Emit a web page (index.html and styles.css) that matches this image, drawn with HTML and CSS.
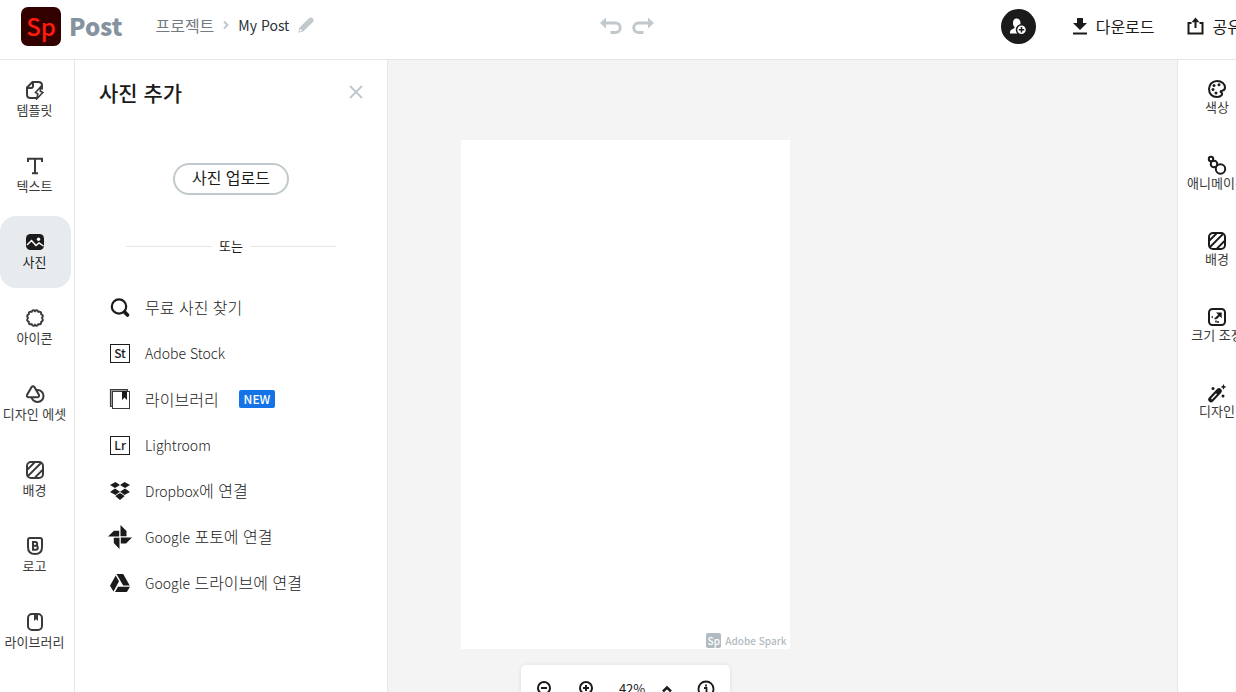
FILE: index.html
```html
<!DOCTYPE html>
<html lang="ko">
<head>
    <meta charset="UTF-8">
    <meta name="viewport" content="width=device-width, initial-scale=1.0">
    <title>My Post</title>
    <link rel="stylesheet" href="styles.css">
</head>
<body>
<div class="app">
    <header class="header">
        <div class="header-left">
            <a class="brand" href="#">
                <span class="logo">Sp</span>
                <span class="brand-name">Post</span>
            </a>
            <nav class="breadcrumb">
                <a class="crumb" href="#">프로젝트</a>
                <svg width="6" height="10" viewBox="0 0 6 10"><path d="M1 1.5l3.5 3.5L1 8.500" fill="none" stroke="#c2c9cd" stroke-width="2"/></svg>
                <span class="project-name">My Post</span>
                <button class="icon-button" aria-label="이름 편집">
                    <svg width="16" height="16" viewBox="0 0 16 16" fill="#c2c9cd"><path d="M1.300 10.700L10.700 1.500Q13 -.4 14.800 1.600Q16.500 3.500 14.700 5.300L5.300 14.600L.3 15.700z"/><path d="M2.300 11.700L4.300 13.700L1.500 14.500z" fill="#fff"/></svg>
                </button>
            </nav>
        </div>
        <div class="history">
            <button class="icon-button" aria-label="실행 취소">
                <svg width="22" height="18" viewBox="0 0 22 18"><path d="M0 6L6 .5v11z" fill="#c2c9cd"/><path d="M5 6h10.500a4.700 4.700 0 0 1 0 9.500H10.500" fill="none" stroke="#c2c9cd" stroke-width="3"/></svg>
            </button>
            <button class="icon-button" aria-label="다시 실행">
                <svg width="22" height="18" viewBox="0 0 22 18"><path d="M22 6L16 .5v11z" fill="#c2c9cd"/><path d="M17 6H6.500a4.700 4.700 0 0 0 0 9.500H11.500" fill="none" stroke="#c2c9cd" stroke-width="3"/></svg>
            </button>
        </div>
        <div class="header-right">
            <button class="invite" aria-label="초대">
                <svg width="17" height="17" viewBox="0 0 17 17"><path d="M6.500 .5c2.500 0 4 1.800 4 4.400 0 2-.7 3.300-1.500 4.100v1l3 1.500v4H0v-1.500c0-2 2-2.700 4.500-4V9C3.500 8.100 3 6.900 3 4.900 3 2.300 4.300.5 6.500.5z" fill="#fff"/><circle cx="11.500" cy="11.700" r="5" fill="#fff" stroke="#1b1b1b" stroke-width="1.500"/><path d="M11.500 9v5.400M8.800 11.700h5.400" stroke="#1b1b1b" stroke-width="1.500"/></svg>
            </button>
            <button class="action">
                <svg width="14" height="18" viewBox="0 0 14 18" fill="#1b1b1b"><path d="M4 1h6v5h4l-7 7-7-7h4zM0 15.500h14v2H0z"/></svg>
                다운로드
            </button>
            <button class="action">
                <svg width="17" height="18" viewBox="0 0 17 18" fill="none" stroke="#1b1b1b" stroke-width="2"><path d="M4.500 6H1.500v10.500h14V6h-3M8.500 11V2"/><path d="M4.500 5.200L8.500 .5l4 4.700z" fill="#1b1b1b" stroke="none"/></svg>
                공유
            </button>
        </div>
    </header>

    <div class="main">
        <nav class="rail">
            <button class="rail-item">
                <svg width="20" height="20" viewBox="0 0 20 20"><path d="M12 18H5.500Q2 18 2 14.500V7.500L7.500 2h6Q17 2 17 5.500v4M2.500 8h3.500Q8 8 8 6V2.500"/><path d="M15.500 7L10.500 12.500l2.300 1.300-1 5 6-6.300-2.500-1.300z" fill="#fff" stroke-width="1.600"/></svg>
                템플릿
            </button>
            <button class="rail-item">
                <svg width="20" height="20" viewBox="0 0 20 20"><path d="M3 6V2.800h14V6M10 3v14M7 17.200h6"/></svg>
                텍스트
            </button>
            <button class="rail-item active">
                <svg width="20" height="20" viewBox="0 0 20 20"><rect x="1" y="2" width="18" height="16" rx="4.500" fill="#1b1b1b" stroke="none"/><path d="M2 13l4.500-4.500 4.500 5 3-2.500 4.500 3" stroke="#fff" stroke-width="1.500"/><circle cx="13.500" cy="7.300" r="1.700" fill="#fff" stroke="none"/></svg>
                사진
            </button>
            <button class="rail-item">
                <svg width="20" height="20" viewBox="0 0 20 20"><path d="M10 3.200Q12 .8 13.400 3.800Q16.500 3 16.200 6.200Q19 7.500 17 10Q19 12.500 16.200 13.800Q16.500 17 13.400 16.200Q12 19.200 10 16.800Q8 19.200 6.600 16.200Q3.500 17 3.800 13.800Q1 12.500 3 10Q1 7.500 3.800 6.200Q3.500 3 6.600 3.800Q8 .8 10 3.200z"/></svg>
                아이콘
            </button>
            <button class="rail-item">
                <svg width="20" height="20" viewBox="0 0 20 20"><circle cx="12.500" cy="12" r="6"/><path d="M6.500 3.200Q8 1.500 9.500 3.200L14 11Q14.500 13 12.500 13.200H3.500Q1.200 13 2 11z" fill="#fff"/></svg>
                디자인 에셋
            </button>
            <button class="rail-item">
                <svg width="20" height="20" viewBox="0 0 20 20"><rect x="2" y="2" width="16" height="16" rx="4"/><path d="M2.500 9.500L9.500 2.500M3 16L16 3M10 17.500L17.500 10" stroke-width="1.800"/></svg>
                배경
            </button>
            <button class="rail-item">
                <svg width="20" height="20" viewBox="0 0 20 20"><path d="M5 2h10Q17 2 17 4v7Q17 18 10 18Q3 18 3 11V4Q3 2 5 2z"/><path d="M8 6h2.300a1.900 1.900 0 0 1 0 3.800H8zM8 9.800h2.800a2 2 0 0 1 0 4H8z"/></svg>
                로고
            </button>
            <button class="rail-item">
                <svg width="20" height="20" viewBox="0 0 20 20"><rect x="3" y="2" width="14" height="16" rx="4"/><path d="M9 3h4v6l-2-1.700L9 9z" fill="#3a3a3a" stroke="none"/></svg>
                라이브러리
            </button>
        </nav>

        <aside class="panel">
            <div class="panel-head">
                <h1 class="panel-title">사진 추가</h1>
                <button class="icon-button" aria-label="닫기">
                    <svg width="14" height="14" viewBox="0 0 14 14"><path d="M1 1l12 12M13 1L1 13" stroke="#c2c9cd" stroke-width="2"/></svg>
                </button>
            </div>
            <button class="upload">사진 업로드</button>
            <div class="divider">또는</div>
            <ul class="sources">
                <li><a class="source" href="#">
                    <svg width="24" height="24" viewBox="0 0 24 24" fill="none" stroke="#1b1b1b"><circle cx="11" cy="11.500" r="7.200" stroke-width="2.200"/><path d="M16.500 17l3 3" stroke-width="3.700" stroke-linecap="round"/></svg>
                    <span class="thin">무료 사진 찾기</span>
                </a></li>
                <li><a class="source" href="#">
                    <svg width="24" height="24" viewBox="0 0 24 24"><rect x="2.500" y="3.500" width="19" height="18" fill="none" stroke="#1b1b1b"/><text class="app-mark" x="12" y="17" text-anchor="middle">St</text></svg>
                    <span class="latin">Adobe Stock</span>
                </a></li>
                <li><a class="source" href="#">
                    <svg width="24" height="24" viewBox="0 0 24 24" fill="none" stroke="#3a3a3a"><path d="M4.500 19.500h-2v-17h17v2" stroke-width="1.200"/><path d="M3.500 19V3.500H19" stroke="#999"/><rect x="4.500" y="4.500" width="17" height="17"/><path d="M14 4h5v9l-2.500-2.500L14 13z" fill="#1b1b1b" stroke="none"/></svg>
                    <span class="thin">라이브러리</span>
                    <span class="badge">NEW</span>
                </a></li>
                <li><a class="source" href="#">
                    <svg width="24" height="24" viewBox="0 0 24 24"><rect x="2.500" y="3.500" width="19" height="18" fill="none" stroke="#1b1b1b"/><text class="app-mark" x="12" y="17" text-anchor="middle">Lr</text></svg>
                    <span class="latin">Lightroom</span>
                </a></li>
                <li><a class="source" href="#">
                    <svg width="24" height="24" viewBox="0 0 24 24" fill="#1b1b1b"><path d="M7.500 3L12 6 7 9 2 6zM16.500 3L22 6l-5 3-5-3zM7 9.500l5 3.300L7.500 16 2 13zM17 9.500l5 3.500-5.500 3L12 12.800zM12 14l4.700 3L12 21l-4.700-4z"/></svg>
                    <span class="thin"><span class="latin">Dropbox</span>에 연결</span>
                </a></li>
                <li><a class="source" href="#">
                    <svg width="24" height="24" viewBox="0 0 24 24" fill="#1b1b1b"><path d="M12.500 0l6 6v5.200h-6zM24 12.500l-6 6h-5.200v-6zM11.500 24l-5.700-6v-5.200h5.700zM0 11.500l6-5.700h5.200v5.700z"/></svg>
                    <span class="thin"><span class="latin">Google</span> 포토에 연결</span>
                </a></li>
                <li><a class="source" href="#">
                    <svg width="24" height="24" viewBox="0 0 24 24" fill="#1b1b1b"><path d="M8.500 3h6.700l6.500 11.500h-6.500zM7.700 4.500L11 10.200 5.500 20.500 2 14.800zM10 15.700h12L18.800 21H7z"/></svg>
                    <span class="thin"><span class="latin">Google</span> 드라이브에 연결</span>
                </a></li>
            </ul>
        </aside>

        <main class="workspace">
            <div class="artboard">
                <div class="watermark"><span class="watermark-logo">Sp</span>Adobe Spark</div>
            </div>
            <div class="zoom-bar">
                <button class="icon-button" aria-label="축소">
                    <svg width="18" height="18" viewBox="0 0 18 18" fill="none" stroke="#1b1b1b" stroke-width="2"><circle cx="9" cy="8" r="6"/><path d="M6 8h6M13 12l4 4"/></svg>
                </button>
                <button class="icon-button" aria-label="확대">
                    <svg width="18" height="18" viewBox="0 0 18 18" fill="none" stroke="#1b1b1b" stroke-width="2"><circle cx="9" cy="8" r="6"/><path d="M6 8h6M9 5v6M13 12l4 4"/></svg>
                </button>
                <button class="zoom-level">42%
                    <svg width="12" height="8" viewBox="0 0 12 8"><path d="M2 6.500l4-4 4 4" fill="none" stroke="#1b1b1b" stroke-width="2.500"/></svg>
                </button>
                <button class="icon-button" aria-label="정보">
                    <svg width="18" height="18" viewBox="0 0 18 18" fill="none" stroke="#1b1b1b" stroke-width="1.800"><circle cx="9" cy="9" r="7.500"/><path d="M7 8h2.500v5M7 13h4.500M9 4.500v2"/></svg>
                </button>
            </div>
        </main>

        <nav class="rail tools">
            <button class="rail-item">
                <svg width="20" height="20" viewBox="0 0 20 20"><path d="M10 2c5 0 8 3 8 6.500 0 2-1.500 3-3 3.200-2 .2-1.700 1.400-.5 2 1.500.8.500 4.300-4.500 4.300-5 0-8-3.500-8-8s3.500-8 8-8z"/><g fill="#1b1b1b" stroke="none"><circle cx="7" cy="6.500" r="1.500"/><circle cx="12" cy="5.800" r="1.500"/><circle cx="6" cy="10.500" r="1.500"/><circle cx="9" cy="14" r="1.500"/></g></svg>
                색상
            </button>
            <button class="rail-item">
                <svg width="20" height="20" viewBox="0 0 20 20"><circle cx="4" cy="4" r="2.200"/><circle cx="7" cy="9" r="3.300"/><circle cx="13.500" cy="14" r="4.700" fill="#fff"/></svg>
                애니메이션
            </button>
            <button class="rail-item">
                <svg width="20" height="20" viewBox="0 0 20 20"><rect x="2" y="2" width="16" height="16" rx="4"/><path d="M2.500 9.500L9.500 2.500M3 16L16 3M10 17.500L17.500 10" stroke-width="1.800"/></svg>
                배경
            </button>
            <button class="rail-item">
                <svg width="20" height="20" viewBox="0 0 20 20"><rect x="2" y="2" width="16" height="16" rx="3.500"/><path d="M9 5.500h5.700v5.700l-2-2-3 3-1.500-1.500 3-3z" fill="#1b1b1b" stroke="none"/><path d="M4.500 10h1.500M7.500 11.500H9M9 13.500v2M11 14v2" stroke-width="1.500"/></svg>
                크기 조정
            </button>
            <button class="rail-item">
                <svg width="20" height="20" viewBox="0 0 20 20"><path d="M4 16.500L12 8" stroke-width="5.500" stroke-linecap="round"/><path d="M4.500 16L9.500 10.700" stroke="#fff" stroke-width="1.300"/><path d="M16.500 1l.9 2 2 .9-2 .9-.9 2-.9-2-2-.9 2-.9z" fill="#1b1b1b" stroke="none"/><circle cx="6" cy="5.500" r="1.500" fill="#1b1b1b" stroke="none"/><circle cx="16" cy="13" r="1.500" fill="#1b1b1b" stroke="none"/></svg>
                디자인
            </button>
        </nav>
    </div>
</div>
</body>
</html>
```
FILE: styles.css
```css
* {
    box-sizing: border-box;
}
body {
    margin: 0;
    overflow: hidden;
    font-family: "Noto Sans CJK KR", sans-serif;
    font-size: 16px;
    line-height: 20px;
    color: #1b1b1b;
    background: #fff;
}
button {
    font: inherit;
    color: inherit;
    background: none;
    border: none;
    padding: 0;
    cursor: pointer;
}
a {
    color: inherit;
    text-decoration: none;
}
svg {
    display: block;
    flex: none;
}
.icon-button {
    display: flex;
}

/* the tool rail runs slightly past the window edge */
.app {
    display: flex;
    flex-direction: column;
    width: calc(100vw + 20px);
    height: 100vh;
}

/* header */
.header {
    display: grid;
    grid-template-columns: 1fr auto 1fr;
    align-items: center;
    height: 60px;
    flex: none;
    padding: 0 14px 6px 21px;
    border-bottom: 1px solid #e6e6e6;
}
.header-left,
.header-right,
.brand,
.breadcrumb,
.history {
    display: flex;
    align-items: center;
}
.header-left {
    gap: 33px;
}
.brand {
    gap: 8px;
}
.logo {
    width: 40px;
    height: 39px;
    border-radius: 7px;
    background: #330000;
    color: #ff1b0e;
    font-size: 24px;
    font-weight: 500;
    line-height: 37px;
    text-align: center;
}
.brand-name {
    padding-bottom: 2px;
    font-size: 24px;
    font-weight: 900;
    color: #8593a0;
}
.breadcrumb {
    gap: 9px;
    padding-bottom: 3px;
}
.crumb {
    color: #747b80;
}
.project-name {
    font-size: 14px;
    color: #2c3038;
}
.history {
    gap: 10px;
    margin-right: 10px;
    padding-bottom: 2px;
}
.header-right {
    justify-content: flex-end;
    gap: 32px;
}
.invite {
    display: flex;
    align-items: center;
    justify-content: center;
    width: 35px;
    height: 35px;
    border-radius: 50%;
    background: #1b1b1b;
}
.action {
    display: flex;
    align-items: center;
    gap: 9px;
    padding-bottom: 2px;
    white-space: nowrap;
}
.invite + .action {
    margin-left: 5px;
}

/* body columns */
.main {
    display: flex;
    flex: 1;
    min-height: 0;
}
.rail {
    display: flex;
    flex-direction: column;
    gap: 4px;
    flex: none;
    width: 75px;
    padding: 4px 3px 0 0;
    border-right: 1px solid #e6e6e6;
}
.rail-item {
    display: flex;
    flex-direction: column;
    align-items: center;
    height: 72px;
    padding: 16px 2px 0 0;
    border-radius: 16px;
    font-size: 13px;
    color: #3a3a3a;
    white-space: nowrap;
    flex: none;
}
.rail-item svg {
    fill: none;
    stroke: #3a3a3a;
    stroke-width: 2;
}
.rail-item.active {
    background: #e8ebee;
    color: #1b1b1b;
}
.tools {
    width: 79px;
    padding: 3px 0 0;
    border-right: none;
    border-left: 1px solid #e6e6e6;
}
.tools .rail-item {
    padding-right: 0;
    line-height: 16px;
}
.tools svg {
    stroke: #1b1b1b;
}

/* photo panel */
.panel {
    flex: none;
    width: 313px;
    padding: 20px 24px;
    border-right: 1px solid #e6e6e6;
}
.panel-head {
    display: flex;
    align-items: center;
    justify-content: space-between;
}
.panel-title {
    margin: 0;
    font-size: 21px;
    font-weight: 500;
    line-height: 24px;
}
.upload {
    display: block;
    height: 32px;
    margin: 59px auto 0;
    padding: 0 17px 4px;
    border: 2px solid #c2c9cd;
    border-radius: 16px;
}
.divider {
    display: flex;
    align-items: center;
    gap: 7px;
    margin: 41px 27px 0;
    font-size: 13px;
}
.divider::before,
.divider::after {
    content: "";
    flex: 1;
    height: 1px;
    background: #e6e6e6;
}
.sources {
    margin: 28px 0 0;
    padding: 0 9px;
    list-style: none;
}
.source {
    display: flex;
    align-items: center;
    gap: 13px;
    height: 46px;
}
.thin {
    padding-bottom: 1px;
    font-weight: 300;
}
.latin {
    font-size: 14px;
    font-weight: 300;
}
.app-mark {
    font-size: 12px;
    font-weight: 500;
    fill: #1b1b1b;
}
.badge {
    margin-left: 7px;
    padding: 0 5px;
    border-radius: 2px;
    background: #1473e6;
    color: #fff;
    font-size: 12px;
    font-weight: 500;
    line-height: 18px;
}

/* canvas area, centred as if the panel floated over it */
.workspace {
    display: flex;
    flex-direction: column;
    align-items: center;
    gap: 16px;
    flex: 1;
    min-width: 0;
    padding: 80px 315px 0 0;
    overflow: hidden;
    background: #f4f4f4;
}
.artboard {
    display: flex;
    align-items: flex-end;
    justify-content: flex-end;
    flex: none;
    width: 329px;
    height: 509px;
    padding: 0 3px 1px 0;
    background: #fff;
}
.watermark {
    display: flex;
    align-items: center;
    gap: 4px;
    font-size: 10px;
    line-height: 15px;
    font-weight: 500;
    color: #b1bbc1;
}
.watermark-logo {
    width: 15px;
    border-radius: 2px;
    background: #b1bbc1;
    color: #fff;
    text-align: center;
    font-size: 10px;
}
.zoom-bar {
    display: flex;
    align-items: center;
    justify-content: space-between;
    flex: none;
    width: 209px;
    height: 48px;
    padding: 0 14px;
    border-radius: 5px;
    background: #fff;
    box-shadow: 0 0 4px rgba(0, 0, 0, 0.1);
}
.zoom-level {
    display: flex;
    align-items: center;
    gap: 16px;
    font-size: 13px;
}
```
